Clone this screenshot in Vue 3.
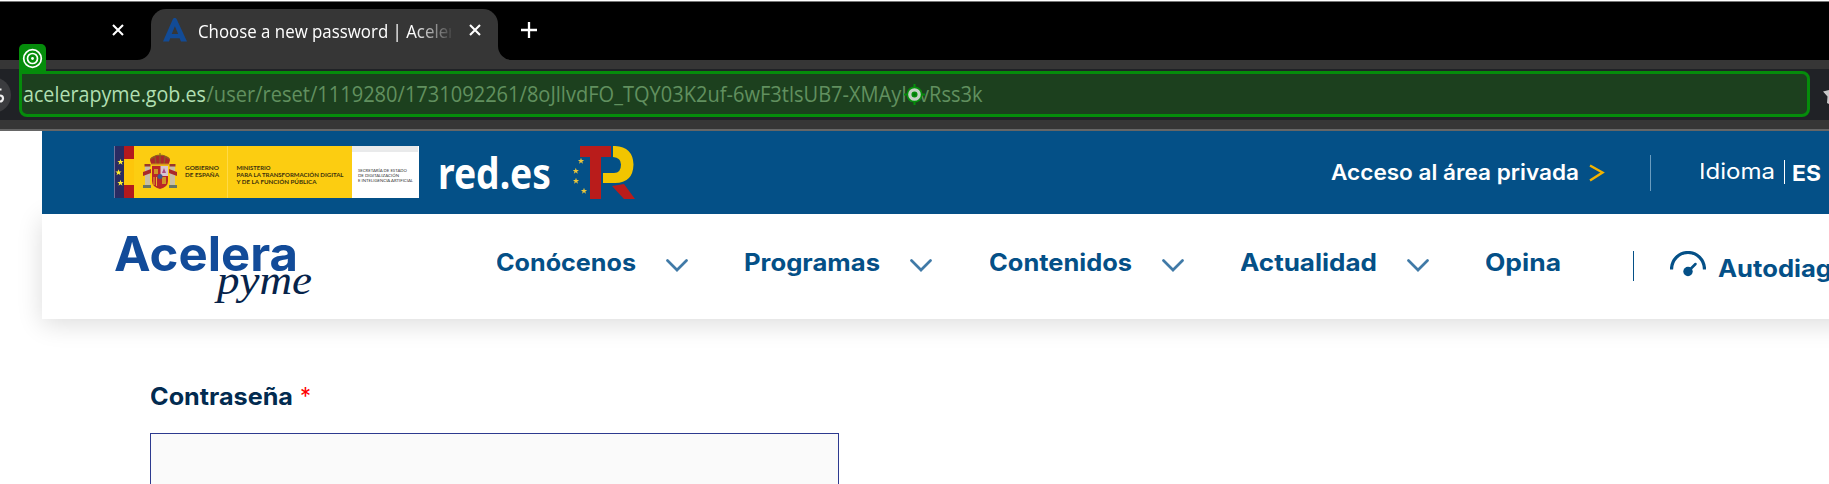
<script setup>
const menu = [
  { label: 'Conócenos', width: 139 },
  { label: 'Programas', width: 135 },
  { label: 'Contenidos', width: 142 },
  { label: 'Actualidad', width: 136 },
]
const star = 'M0-3.3L.8-1.1 3.1-1 1.3.4 2 2.7 0 1.3-2 2.7-1.3.4-3.1-1-.8-1.1Z'
const bannerStars = [[6.5, 16], [4.5, 26.5], [6.5, 37]]
const planStars = [[8, 15], [2.8, 25], [3, 35], [11, 45]]
</script>

<template>
  <div class="screen">
    <header class="browser">
      <div class="tabs">
        <svg class="closer first" width="12" height="12" viewBox="0 0 12 12"><path d="M1 1l10 10M11 1L1 11" stroke="#fff" stroke-width="2.1" /></svg>
        <div class="tab">
          <svg class="flare left" width="14" height="14"><path d="M14 0v14H0A14 14 0 0 0 14 0Z" fill="#363636" /></svg>
          <svg width="24" height="24" viewBox="0 0 24 26" preserveAspectRatio="none"><path fill="#124b96" fill-rule="evenodd" d="M9.8 1.4C10.5-.4 13-.4 13.7 1.4L24 25.5h-6L16.6 22H7.2L6 25.5H0ZM11.9 9L8.7 17.3h6.5Z" /></svg>
          <svg class="title" width="252" height="30">
            <text x="-1" y="21" font-size="18" textLength="257" lengthAdjust="spacingAndGlyphs" fill="#fff">Choose a new password | Aceler</text>
          </svg>
          <svg class="closer" width="12" height="12" viewBox="0 0 12 12"><path d="M1 1l10 10M11 1L1 11" stroke="#fff" stroke-width="2.1" /></svg>
          <svg class="flare right" width="14" height="14"><path d="M0 0v14h14A14 14 0 0 1 0 0Z" fill="#363636" /></svg>
        </div>
        <svg class="plus" width="16" height="16"><path d="M8 0v16M0 8h16" stroke="#fff" stroke-width="2.3" /></svg>
      </div>
      <div class="toolbar">
        <div class="omnibox">
          <svg class="siteinfo" width="12" height="40"><circle cx="-7" cy="20" r="18" fill="#3b3c3f" /><path d="M-3 14.5H1.5M-3 20.5H0a3 3 0 0 1 0 6h-3" fill="none" stroke="#f0f0f0" stroke-width="2.2" /></svg>
          <div class="address">
            <div class="badge">
              <svg width="21" height="21" viewBox="0 0 21 21" fill="none" stroke="#fff" stroke-width="1.7"><circle cx="10.5" cy="10.5" r="8.800" /><circle cx="10.5" cy="10.5" r="5" /><circle cx="10.5" cy="10.5" r="1.4" fill="#fff" stroke="none" /></svg>
            </div>
            <svg width="964" height="40">
              <text x="1" y="27.700" font-size="21" textLength="183" lengthAdjust="spacingAndGlyphs" fill="#b0dfb1">acelerapyme.gob.es</text>
              <text x="184.500" y="27.700" font-size="21" textLength="776" lengthAdjust="spacingAndGlyphs" fill="#61905f">/user/reset/1119280/1731092261/8oJllvdFO_TQY03K2uf-6wF3tlsUB7-XMAyIovRss3k</text>
            </svg>
            <svg class="aim" width="21" height="21" viewBox="0 0 21 21"><path d="M10.500 0v21M0 10.500h21" stroke="#058c0b" stroke-width="2" /><circle cx="10.500" cy="10.500" r="8" fill="#058c0b" /><circle cx="10.500" cy="10.500" r="4.700" fill="#058c0b" stroke="#c2d0c2" stroke-width="3.300" /><circle cx="10.500" cy="10.500" r="1.200" fill="#047507" /></svg>
          </div>
          <svg class="bookmark" width="6" height="20"><path d="M0 6.500L6 5v14L4 18l.500-6.500Z" fill="#c8c8c8" /></svg>
        </div>
      </div>
    </header>

    <main class="site">
      <div class="topbar">
        <svg class="gov" width="305" height="52" viewBox="0 0 305 52">
          <path fill="#fccd11" d="M0 0h238v52H0z" />
          <path fill="#292b62" d="M0 0h10v52H0z" />
          <path fill="#b3191d" d="M10 0h10v13H10zM10 39h10v13H10z" />
          <path fill="#fdc60b" d="M10 13h10v26H10z" />
          <path d="M.5 0v52" stroke="#6f739b" />
          <path d="M113.500 0v52" stroke="#ffda45" />
          <path v-for="(p, i) in bannerStars" :key="i" :d="star" :transform="`translate(${p[0]} ${p[1]})`" fill="#ffee2e" />
          <g>
            <path d="M31 20h5v20h-5zM56 20h5v20h-5z" fill="#c8bfa4" />
            <path d="M29 26l8-3v4l-8 3zM55 23l8 3v4l-8-3z" fill="#a92a2a" />
            <path d="M30.500 18h6v2.500h-6zM55.500 18h6v2.500h-6z" fill="#9a372a" />
            <path d="M29 39h8v3h-8zM55 39h8v3h-8z" fill="#697564" />
            <path d="M38 20h16v15q0 6-8 8-8-2-8-8z" fill="#b92527" />
            <path d="M46.500 20H54v10h-7.500z" fill="#d7c5d1" />
            <path d="M48 27l2-5 2 5z" fill="#ac4d82" />
            <path d="M40 23h4v5h-4zM48 31h4v7h-4z" fill="#d09325" />
            <path d="M40 31v8M42.500 31v9" stroke="#e7b22b" stroke-width="1" />
            <circle cx="46" cy="30.500" r="2.500" fill="#41578b" />
            <path d="M38 19q-4-6 0-8 4-2 8-2t8 2q4 2 0 8z" fill="#a9292a" />
            <path d="M37 13q4-4 9-4t9 4M46 7v12M41 11l1 7M51 11l-1 7" fill="none" stroke="#8a641e" stroke-width="1.200" />
            <path d="M38 18.500h16" stroke="#d8971f" stroke-width="1.800" />
          </g>
          <g fill="#3b300d" font-family="Lato" font-weight="700" font-size="5.800">
            <text x="71" y="24" textLength="34" lengthAdjust="spacingAndGlyphs">GOBIERNO</text>
            <text x="71" y="31" textLength="34" lengthAdjust="spacingAndGlyphs">DE ESPAÑA</text>
            <text x="122.500" y="24" textLength="34" lengthAdjust="spacingAndGlyphs">MINISTERIO</text>
            <text x="122.500" y="31" textLength="107" lengthAdjust="spacingAndGlyphs">PARA LA TRANSFORMACIÓN DIGITAL</text>
            <text x="122.500" y="37.800" textLength="80" lengthAdjust="spacingAndGlyphs">Y DE LA FUNCIÓN PÚBLICA</text>
          </g>
          <path fill="#fff" d="M238 0h67v52h-67z" />
          <path fill="#e9eaeb" d="M238 0h66v6h-66z" />
          <g fill="#333" font-family="Lato" font-size="4.600">
            <text x="244" y="25.700" textLength="49" lengthAdjust="spacingAndGlyphs">SECRETARÍA DE ESTADO</text>
            <text x="244" y="30.600" textLength="41" lengthAdjust="spacingAndGlyphs">DE DIGITALIZACIÓN</text>
            <text x="244" y="35.500" textLength="55" lengthAdjust="spacingAndGlyphs">E INTELIGENCIA ARTIFICIAL</text>
          </g>
        </svg>
        <svg class="redes" width="114" height="52">
          <text x="-2" y="43" font-family="Noto Sans" font-weight="700" font-size="43" fill="#fff" textLength="113" lengthAdjust="spacingAndGlyphs">red.es</text>
        </svg>
        <svg class="plan" width="64" height="54">
          <path fill="#b91c1b" d="M7 0h31v11H28v42H17V11H7zM39 40l12-2 11 15H51z" />
          <path fill="#f2c500" d="M40 0h2q18 1 18.500 18.500Q60 37 42 37H30V27h11q7 0 7-8.500 0-7-8-7.500z" />
          <path v-for="(p, i) in planStars" :key="i" :d="star" :transform="`translate(${p[0]} ${p[1]})`" fill="#ecc63a" />
        </svg>
        <div class="account">
          <svg width="249" height="32"><text x="0" y="22" font-size="21.500" font-weight="600" fill="#fff" textLength="248" lengthAdjust="spacingAndGlyphs">Acceso al área privada</text></svg>
          <svg class="arrow" width="16" height="18"><path d="M1 1.500l12.500 7L1 16.500" fill="none" stroke="#f2b200" stroke-width="2.400" /></svg>
          <i class="rule"></i>
          <svg class="idioma" width="76" height="32"><text x="-2" y="21" font-size="21.500" fill="#fff" textLength="76" lengthAdjust="spacingAndGlyphs">Idioma</text></svg>
          <i class="rule small"></i>
          <svg class="lang" width="30" height="32"><text x="-1" y="23" font-size="21.500" font-weight="700" fill="#fff" textLength="29" lengthAdjust="spacingAndGlyphs">ES</text></svg>
        </div>
      </div>

      <div class="mainbar">
        <svg class="logo" width="200" height="84">
          <text x="-1" y="46.500" font-weight="700" font-size="47.500" fill="#124b99" textLength="184" lengthAdjust="spacingAndGlyphs">Acelera</text>
          <text x="102" y="70" font-family="Liberation Serif" font-style="italic" font-size="43" fill="#06234a" textLength="95" lengthAdjust="spacingAndGlyphs">pyme</text>
        </svg>
        <nav>
          <div v-for="item in menu" :key="item.label" class="entry">
            <svg :width="item.width" height="36"><text x="-1" y="25" font-size="24" font-weight="700" fill="#045087" :textLength="item.width + 1" lengthAdjust="spacingAndGlyphs">{{ item.label }}</text></svg>
            <svg width="22" height="13"><path d="M1.500 1.500L11 11l9.500-9.500" fill="none" stroke="#407aa7" stroke-width="2.700" stroke-linecap="round" /></svg>
          </div>
          <svg width="75" height="36"><text x="-1" y="25" font-size="24" font-weight="700" fill="#045087" textLength="76" lengthAdjust="spacingAndGlyphs">Opina</text></svg>
        </nav>
        <i class="divider"></i>
        <svg class="gauge" width="36" height="26"><path d="M1.500 18.500a16.500 17 0 0 1 33 0" fill="none" stroke="#045087" stroke-width="3.200" /><circle cx="18" cy="20.500" r="4.700" fill="#045087" /><path d="M18 20.500l7.500-7.500" stroke="#045087" stroke-width="2.500" stroke-linecap="round" /></svg>
        <svg class="diagnosis" width="112" height="36"><text x="0" y="25" font-size="24" font-weight="700" fill="#045087" textLength="114" lengthAdjust="spacingAndGlyphs">Autodiag</text></svg>
      </div>

      <form class="reset" @submit.prevent>
        <label for="pass">
          <svg width="142" height="34"><text x="-1" y="26" font-size="24" font-weight="700" fill="#022b50" textLength="143" lengthAdjust="spacingAndGlyphs">Contraseña</text></svg>
          <svg width="12" height="34"><text x="0" y="26" font-size="24" fill="#f00" textLength="11" lengthAdjust="spacingAndGlyphs">*</text></svg>
        </label>
        <input id="pass" type="password" />
      </form>
    </main>
  </div>
</template>

<style>
body { background: #fff; overflow: hidden; }
</style>

<style scoped>
.screen { width: 1829px; height: 484px; overflow: hidden; background: #fff; font-family: Inter, "Open Sans", sans-serif; }
svg { display: block; flex: none; }
.browser { height: 131px; box-sizing: border-box; border-bottom: 2px solid #666; font-family: "Open Sans", "Noto Sans", sans-serif; background: #363636; position: relative; z-index: 2; }
.tabs { height: 60px; box-sizing: border-box; background: #000; border-top: 1px solid #fff; box-shadow: inset 0 1px #777; display: flex; align-items: flex-start; }
.first { margin: 23px 27px 0 112px; }
.tab { position: relative; box-sizing: border-box; width: 347px; height: 51px; margin-top: 8px; padding: 9px 0 0 12px; display: flex; background: #363636; border-radius: 15px 15px 0 0; }
.title { margin: -1px 0 0 12px; -webkit-mask-image: linear-gradient(to right, #000 214px, transparent 256px); mask-image: linear-gradient(to right, #000 214px, transparent 256px); }
.tab .closer { margin: 6px 0 0 18px; }
.flare { position: absolute; bottom: 0; }
.left { left: -14px; }
.right { right: -14px; }
.plus { margin: 21px 0 0 23px; }
.toolbar { padding-top: 9px; }
.omnibox { height: 51px; background: #202226; display: flex; align-items: center; }
.siteinfo { margin-right: 7px; }
.address { position: relative; box-sizing: border-box; width: 1791px; height: 46px; margin-bottom: 1px; border: 3px solid #058c0b; border-radius: 0 8px 8px 8px; background: #1c401e; }
.badge { position: absolute; left: -3px; top: -30px; width: 27px; height: 28px; border-radius: 5px 5px 0 0; background: #058c0b; display: grid; place-items: center; }
.aim { position: absolute; left: 882px; top: 10px; }
.bookmark { margin-left: 13px; }
.site { margin-left: 42px; }
.topbar { height: 83px; background: #045087; display: flex; box-sizing: border-box; padding: 15px 0 0 72px; position: relative; z-index: 1; }
.redes { margin-left: 21px; }
.plan { margin-left: 19px; }
.account { display: flex; flex: none; align-items: flex-start; padding-top: 12px; margin-left: 694px; }
.arrow { margin: 6px 0 0 9px; }
.rule { width: 1px; height: 36px; margin: -3px 0 0 45px; background: #6b9cbf; }
.idioma { margin-left: 50px; }
.rule.small { height: 24px; margin: 2px 0 0 7px; background: #fff; }
.lang { margin-left: 8px; }
.mainbar { height: 105px; margin-right: -60px; display: flex; align-items: flex-start; background: #fff; box-shadow: 0 5px 24px rgba(0, 0, 0, .14); }
.logo { margin: 10px 0 0 73px; }
nav { display: flex; align-items: flex-start; gap: 57.3px; margin: 32px 0 0 182px; }
.entry { display: flex; gap: 30px; }
.entry svg:last-child { margin-top: 13px; }
.divider { flex: none; width: 1px; height: 30px; background: #045087; margin: 37px 0 0 72px; }
.gauge { margin: 37px 0 0 36px; }
.diagnosis { margin: 38px 0 0 12px; }
.reset { padding: 60px 0 0 108px; }
label { display: flex; gap: 7px; margin-left: 1px; }
input { display: block; box-sizing: border-box; width: 689px; height: 70px; margin-top: 20px; padding: 0 16px; border: 1px solid #2d3a8f; background: #fafafa; border-radius: 0; }
</style>
